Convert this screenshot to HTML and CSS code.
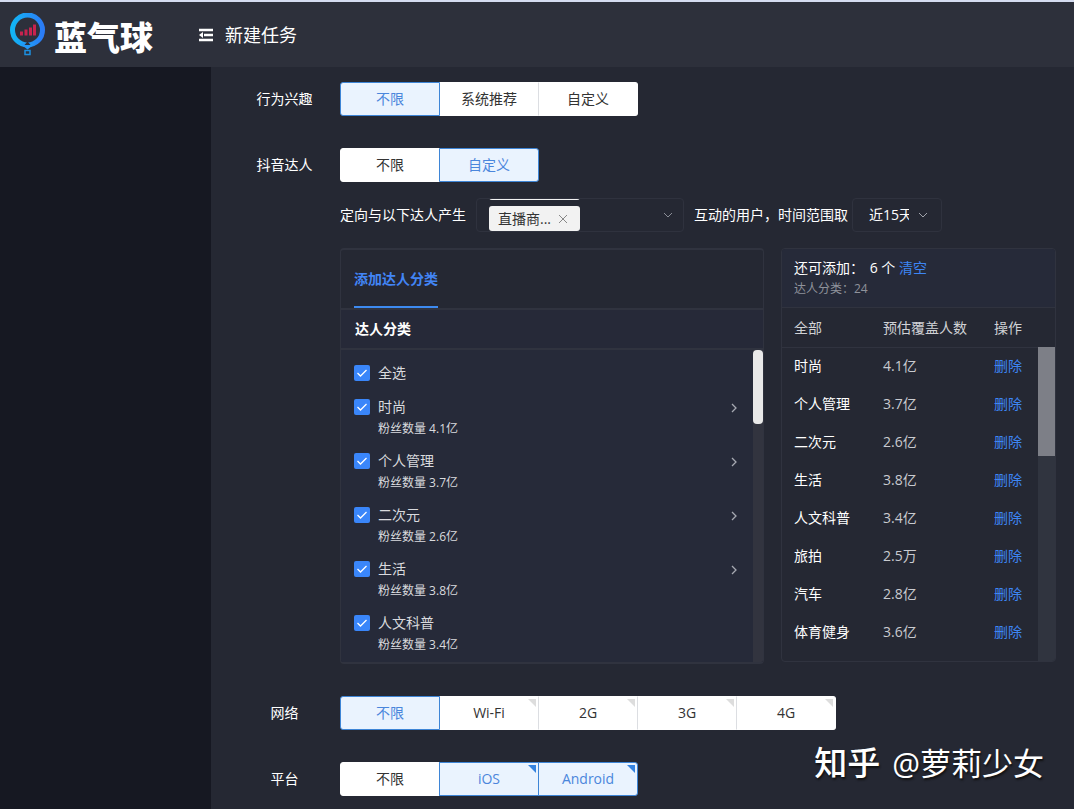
FILE: index.html
```html
<!DOCTYPE html>
<html lang="zh-CN">
<head>
<meta charset="utf-8">
<title>新建任务</title>
<link rel="stylesheet" href="styles.css">
</head>
<body>
<header class="topbar">
  <div class="brand">
    <svg class="brand-mark" width="36" height="44" viewBox="0 0 36 44" aria-hidden="true">
      <defs><linearGradient id="ring" x1="0" x2="1" y1="0" y2="0"><stop offset="0" stop-color="#12b4f5"/><stop offset="1" stop-color="#2b7cf6"/></linearGradient></defs>
      <circle cx="17.500" cy="17" r="15" fill="none" stroke="url(#ring)" stroke-width="5"/>
      <path d="M10 30.500h15l-7.500 6z" fill="#2496f5"/>
      <path d="M17.500 28.500l3 3.500h-6z" fill="#2d303b"/>
      <path d="M15 37.500h5v4h-5z" fill="none" stroke="#1c8fe0" stroke-width="1.500"/>
      <path d="M11.500 22.500v-4M16 22.500v-6M20.500 22.500v-8M24.500 22.500v-11" fill="none" stroke="#c8234f" stroke-width="3"/>
    </svg>
    <span class="brand-name">蓝气球</span>
  </div>
  <button class="menu-toggle" type="button" aria-label="收起菜单">
    <svg width="14" height="14" viewBox="0 0 14 14" aria-hidden="true"><path d="M0 2h14M5 7h9M0 12h14" stroke="#fff" stroke-width="2.500"/><path d="M0 7l4-3v6z" fill="#fff"/></svg>
  </button>
  <h1 class="page-title">新建任务</h1>
</header>
<div class="shell">
  <aside class="sidebar"></aside>
  <main class="form">
    <div class="row">
      <span class="label">行为兴趣</span>
      <div class="segments" role="group" aria-label="行为兴趣">
        <button class="seg on" type="button">不限</button><button class="seg" type="button">系统推荐</button><button class="seg" type="button">自定义</button>
      </div>
    </div>
    <div class="row">
      <span class="label">抖音达人</span>
      <div class="field">
        <div class="segments" role="group" aria-label="抖音达人">
          <button class="seg" type="button">不限</button><button class="seg on" type="button">自定义</button>
        </div>
        <div class="sentence">
          <span>定向与以下达人产生</span>
          <div class="multi">
            <div class="tags">
              <span class="tag" aria-hidden="true"></span>
              <span class="tag">直播商...<button class="tag-x" type="button" aria-label="移除"><svg width="8" height="8" viewBox="0 0 8 8"><path d="M0 0l8 8M8 0l-8 8" stroke="#888" fill="none"/></svg></button></span>
            </div>
            <svg class="caret" width="8" height="6" viewBox="0 0 8 6" aria-hidden="true"><path d="M0 1l4 4l4-4" fill="none" stroke="#8b8e97"/></svg>
          </div>
          <label for="range">互动的用户，时间范围取</label>
          <div class="range">
            <select id="range"><option>近15天</option></select>
            <svg class="caret" width="10" height="6" viewBox="0 0 10 6" aria-hidden="true"><path d="M1 1l4 4l4-4" fill="none" stroke="#a0a3ab"/></svg>
          </div>
        </div>
        <div class="panels">
          <section class="picker">
            <div class="tabs"><button class="tab" type="button">添加达人分类</button></div>
            <h2 class="picker-head">达人分类</h2>
            <div class="picker-body">
              <div class="all"><input type="checkbox" id="c0" checked><label for="c0">全选</label></div>
              <ul class="list">
                <li class="item"><input type="checkbox" id="c1" checked><label for="c1">时尚<small>粉丝数量 4.1亿</small></label><svg class="next" width="8" height="12" viewBox="0 0 8 12"><path d="M2 2l4 4l-4 4" fill="none" stroke="#a6a9b1" stroke-width="1.300"/></svg></li>
                <li class="item"><input type="checkbox" id="c2" checked><label for="c2">个人管理<small>粉丝数量 3.7亿</small></label><svg class="next" width="8" height="12" viewBox="0 0 8 12"><path d="M2 2l4 4l-4 4" fill="none" stroke="#a6a9b1" stroke-width="1.300"/></svg></li>
                <li class="item"><input type="checkbox" id="c3" checked><label for="c3">二次元<small>粉丝数量 2.6亿</small></label><svg class="next" width="8" height="12" viewBox="0 0 8 12"><path d="M2 2l4 4l-4 4" fill="none" stroke="#a6a9b1" stroke-width="1.300"/></svg></li>
                <li class="item"><input type="checkbox" id="c4" checked><label for="c4">生活<small>粉丝数量 3.8亿</small></label><svg class="next" width="8" height="12" viewBox="0 0 8 12"><path d="M2 2l4 4l-4 4" fill="none" stroke="#a6a9b1" stroke-width="1.300"/></svg></li>
                <li class="item"><input type="checkbox" id="c5" checked><label for="c5">人文科普<small>粉丝数量 3.4亿</small></label></li>
              </ul>
              <div class="bar"><div class="thumb"></div></div>
            </div>
          </section>
          <section class="chosen">
            <div class="chosen-head">
              <p class="quota">还可添加： <span class="left">6 个</span> <a href="#clear">清空</a></p>
              <p class="count">达人分类：24</p>
            </div>
            <div class="chosen-body">
              <table>
                <thead><tr><th class="c-name">全部</th><th class="c-num">预估覆盖人数</th><th>操作</th></tr></thead>
                <tbody>
                  <tr><td>时尚</td><td>4.1亿</td><td><a href="#del">删除</a></td></tr>
                  <tr><td>个人管理</td><td>3.7亿</td><td><a href="#del">删除</a></td></tr>
                  <tr><td>二次元</td><td>2.6亿</td><td><a href="#del">删除</a></td></tr>
                  <tr><td>生活</td><td>3.8亿</td><td><a href="#del">删除</a></td></tr>
                  <tr><td>人文科普</td><td>3.4亿</td><td><a href="#del">删除</a></td></tr>
                  <tr><td>旅拍</td><td>2.5万</td><td><a href="#del">删除</a></td></tr>
                  <tr><td>汽车</td><td>2.8亿</td><td><a href="#del">删除</a></td></tr>
                  <tr><td>体育健身</td><td>3.6亿</td><td><a href="#del">删除</a></td></tr>
                </tbody>
              </table>
              <div class="bar wide"><div class="thumb"></div></div>
            </div>
          </section>
        </div>
      </div>
    </div>
    <div class="row">
      <span class="label">网络</span>
      <div class="segments" role="group" aria-label="网络">
        <button class="seg on" type="button">不限</button><button class="seg multi-seg" type="button">Wi-Fi</button><button class="seg multi-seg" type="button">2G</button><button class="seg multi-seg" type="button">3G</button><button class="seg multi-seg" type="button">4G</button>
      </div>
    </div>
    <div class="row">
      <span class="label">平台</span>
      <div class="segments" role="group" aria-label="平台">
        <button class="seg" type="button">不限</button><button class="seg multi-seg on" type="button">iOS</button><button class="seg multi-seg on" type="button">Android</button>
      </div>
    </div>
  </main>
</div>
<div class="credit"><b>知乎</b><span>@萝莉少女</span></div>
</body>
</html>
```
FILE: styles.css
```css
* { box-sizing: border-box; }
body {
  margin: 0;
  min-height: 100vh;
  display: flex;
  flex-direction: column;
  background: #252833;
  color: #fff;
  font: 14px/20px "Open Sans", "Noto Sans CJK SC", sans-serif;
}
button, select, input { font: inherit; margin: 0; }
button { padding: 0; border: 0; background: none; color: inherit; cursor: pointer; }
h1, h2, p, ul { margin: 0; padding: 0; }
a { color: #3d86f5; text-decoration: none; }

.topbar {
  display: flex;
  align-items: center;
  height: 67px;
  padding-left: 10px;
  border-top: 2px solid #d5dcf0;
  background: #2d303b;
}
.brand { display: flex; align-items: center; width: 189px; gap: 8px; }
.brand-name { font-size: 33px; line-height: 40px; font-weight: 900; padding-top: 6px; }
.menu-toggle { display: flex; margin-right: 12px; }
.page-title { font-size: 18px; line-height: 24px; font-weight: 400; }

.shell { display: flex; flex: 1; }
.sidebar { width: 211px; flex: none; background: #161822; }
.form {
  flex: 1;
  min-width: 0;
  display: flex;
  flex-direction: column;
  gap: 32px;
  padding: 15px 18px 12px;
}
.row { display: grid; grid-template-columns: 111px minmax(0, 1fr); align-items: start; }
.label { text-align: center; line-height: 34px; }
.field { display: flex; flex-direction: column; gap: 16px; }

.segments { display: flex; }
.seg {
  position: relative;
  width: 100px;
  height: 34px;
  border: 1px solid #fff;
  border-left-color: #dcdee2;
  background: #fff;
  color: #333;
}
.seg + .seg { margin-left: -1px; }
.seg:first-child { border-left-color: #fff; border-radius: 3px 0 0 3px; }
.seg:last-child { border-radius: 0 3px 3px 0; }
.seg.on { z-index: 1; border-color: #3e85d6; background: #eaf3fe; color: #4a86dc; }
.multi-seg::after {
  content: "";
  position: absolute;
  top: 2px;
  right: 2px;
  border: 4px solid;
  border-color: #ddd #ddd transparent transparent;
}
.multi-seg.on::after { border-color: #3583e0 #3583e0 transparent transparent; }

.sentence { display: flex; align-items: center; height: 34px; white-space: nowrap; }
.multi {
  display: flex;
  align-items: center;
  justify-content: space-between;
  width: 208px;
  height: 34px;
  margin: 0 10px;
  padding: 0 11px 0 12px;
  border: 1px solid #2f323e;
  border-radius: 4px;
}
.tags { display: flex; flex-direction: column; justify-content: flex-end; gap: 6px; height: 32px; overflow: hidden; }
.tag {
  flex: none;
  display: flex;
  align-items: center;
  justify-content: space-between;
  width: 91px;
  height: 25px;
  padding: 0 13px 0 9px;
  border-radius: 3px;
  background: #f2f2f2;
  color: #333;
}
.tag-x { display: flex; }
.range { position: relative; margin-left: 4px; }
.range select {
  display: block;
  appearance: none;
  width: 90px;
  height: 34px;
  padding: 0 32px 0 16px;
  border: 1px solid #2f323e;
  border-radius: 4px;
  background: transparent;
  color: #fff;
  text-overflow: clip;
}
.range .caret { position: absolute; top: 14px; right: 14px; }

.panels { display: grid; grid-template-columns: minmax(0, 1fr) 275px; gap: 17px; }
.picker, .chosen {
  display: flex;
  flex-direction: column;
  border: 1px solid #30333f;
  border-radius: 4px;
  overflow: hidden;
}
.picker { border-width: 2px 1px; }
.tabs { display: flex; height: 58px; padding: 0 13px; }
.tab { border-bottom: 2px solid #3d8af0; padding-top: 2px; color: #4285f5; font-weight: 700; }
.picker-head {
  padding: 9px 14px;
  border: solid #30333f;
  border-width: 2px 0;
  background: #262938;
  font-size: 14px;
  line-height: 20px;
}
.picker-body { position: relative; flex: 1; padding: 6px 13px 2px; background: #262a39; color: #d9dade; }
.all { display: flex; align-items: center; gap: 8px; height: 34px; }
.list { list-style: none; }
.item { display: flex; gap: 8px; padding: 7px 12px 6px 0; }
.item label { flex: 1; }
.item small { display: block; margin-top: 3px; font-size: 12px; line-height: 18px; }
.item input { margin-top: 2px; }
.next { margin-top: 5px; }
input[type="checkbox"] {
  appearance: none;
  flex: none;
  width: 16px;
  height: 16px;
  border-radius: 2px;
  background: #3a86fa url("data:image/svg+xml,%3Csvg xmlns='http://www.w3.org/2000/svg' viewBox='0 0 16 16'%3E%3Cpath d='M3.500 8l3 3l6-6' fill='none' stroke='white' stroke-width='1.300'/%3E%3C/svg%3E");
}
.bar { position: absolute; top: 0; right: 0; bottom: 0; width: 10px; background: #32343f; }
.bar .thumb { height: 74px; border-radius: 4px; background: #e9e9e9; }
.bar.wide { top: 39px; width: 17px; background: #30343f; }
.bar.wide .thumb { height: 109px; border-radius: 0; background: #7d7f87; }

.chosen { margin-bottom: 2px; }
.chosen-head { padding: 9px 12px 8px; border-bottom: 1px solid #30333f; background: #262a39; }
.left { margin-left: 2px; }
.count { margin-top: 1px; color: #8f929b; font-size: 12px; }
.chosen-body { position: relative; flex: 1; }
table { width: 100%; border-collapse: collapse; text-align: left; }
th { height: 39px; padding: 2px 0 0 12px; border-bottom: 1px solid #30333f; color: #d0d2d6; font-weight: 400; }
td { height: 38px; padding: 0 0 0 12px; color: #c9cbd0; }
td:first-child { color: #fff; }
.c-name { width: 89px; }
.c-num { width: 111px; }

.credit {
  position: absolute;
  right: 30px;
  bottom: 22px;
  display: flex;
  align-items: center;
  gap: 12px;
  font-size: 31px;
  line-height: 48px;
  text-shadow: 1px 2px 2px #111;
}
.credit b { font-size: 33px; font-weight: 500; }
```
